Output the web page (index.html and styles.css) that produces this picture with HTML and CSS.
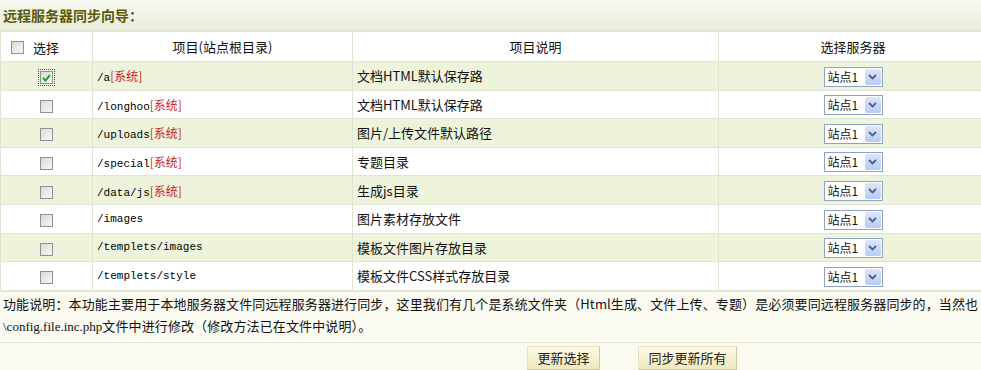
FILE: index.html
```html
<!DOCTYPE html>
<html lang="zh-CN">
<head>
<meta charset="utf-8">
<title>远程服务器同步向导</title>
<link rel="stylesheet" href="styles.css">
</head>
<body>
<div class="wrap">
  <div class="titlebar">远程服务器同步向导：</div>
  <table class="grid">
    <colgroup>
      <col class="c1"><col class="c2"><col class="c3"><col class="c4">
    </colgroup>
    <thead>
      <tr class="head">
        <th class="sel-head"><span class="cb"></span><span class="sel-label">选择</span></th>
        <th>项目(站点根目录)</th>
        <th>项目说明</th>
        <th>选择服务器</th>
      </tr>
    </thead>
    <tbody>
      <tr class="alt">
        <td class="ck"><span class="cb checked focus"><svg viewBox="0 0 9 8" width="9" height="8"><path d="M1 4 L3.5 6.5 L8 1.2" fill="none" stroke="#21a121" stroke-width="2"/></svg></span></td>
        <td class="path">/a<span class="sys">[系统]</span></td>
        <td class="desc">文档HTML默认保存路</td>
        <td class="srv"><span class="select"><span class="opt">站点1</span><span class="arrow"><svg viewBox="0 0 9 6" width="9" height="6"><path d="M1 1 L4.5 4.5 L8 1" fill="none" stroke="#4d6185" stroke-width="1.8"/></svg></span></span></td>
      </tr>
      <tr>
        <td class="ck"><span class="cb"></span></td>
        <td class="path">/longhoo<span class="sys">[系统]</span></td>
        <td class="desc">文档HTML默认保存路</td>
        <td class="srv"><span class="select"><span class="opt">站点1</span><span class="arrow"><svg viewBox="0 0 9 6" width="9" height="6"><path d="M1 1 L4.5 4.5 L8 1" fill="none" stroke="#4d6185" stroke-width="1.8"/></svg></span></span></td>
      </tr>
      <tr class="alt">
        <td class="ck"><span class="cb"></span></td>
        <td class="path">/uploads<span class="sys">[系统]</span></td>
        <td class="desc">图片/上传文件默认路径</td>
        <td class="srv"><span class="select"><span class="opt">站点1</span><span class="arrow"><svg viewBox="0 0 9 6" width="9" height="6"><path d="M1 1 L4.5 4.5 L8 1" fill="none" stroke="#4d6185" stroke-width="1.8"/></svg></span></span></td>
      </tr>
      <tr>
        <td class="ck"><span class="cb"></span></td>
        <td class="path">/special<span class="sys">[系统]</span></td>
        <td class="desc">专题目录</td>
        <td class="srv"><span class="select"><span class="opt">站点1</span><span class="arrow"><svg viewBox="0 0 9 6" width="9" height="6"><path d="M1 1 L4.5 4.5 L8 1" fill="none" stroke="#4d6185" stroke-width="1.8"/></svg></span></span></td>
      </tr>
      <tr class="alt">
        <td class="ck"><span class="cb"></span></td>
        <td class="path">/data/js<span class="sys">[系统]</span></td>
        <td class="desc">生成js目录</td>
        <td class="srv"><span class="select"><span class="opt">站点1</span><span class="arrow"><svg viewBox="0 0 9 6" width="9" height="6"><path d="M1 1 L4.5 4.5 L8 1" fill="none" stroke="#4d6185" stroke-width="1.8"/></svg></span></span></td>
      </tr>
      <tr>
        <td class="ck"><span class="cb"></span></td>
        <td class="path">/images</td>
        <td class="desc">图片素材存放文件</td>
        <td class="srv"><span class="select"><span class="opt">站点1</span><span class="arrow"><svg viewBox="0 0 9 6" width="9" height="6"><path d="M1 1 L4.5 4.5 L8 1" fill="none" stroke="#4d6185" stroke-width="1.8"/></svg></span></span></td>
      </tr>
      <tr class="alt">
        <td class="ck"><span class="cb"></span></td>
        <td class="path">/templets/images</td>
        <td class="desc">模板文件图片存放目录</td>
        <td class="srv"><span class="select"><span class="opt">站点1</span><span class="arrow"><svg viewBox="0 0 9 6" width="9" height="6"><path d="M1 1 L4.5 4.5 L8 1" fill="none" stroke="#4d6185" stroke-width="1.8"/></svg></span></span></td>
      </tr>
      <tr>
        <td class="ck"><span class="cb"></span></td>
        <td class="path">/templets/style</td>
        <td class="desc">模板文件CSS样式存放目录</td>
        <td class="srv"><span class="select"><span class="opt">站点1</span><span class="arrow"><svg viewBox="0 0 9 6" width="9" height="6"><path d="M1 1 L4.5 4.5 L8 1" fill="none" stroke="#4d6185" stroke-width="1.8"/></svg></span></span></td>
      </tr>
    </tbody>
  </table>
  <div class="note">
    <div class="line">功能说明：本功能主要用于本地服务器文件同远程服务器进行同步，这里我们有几个是系统文件夹（Html生成、文件上传、专题）是必须要同远程服务器同步的，当然也</div>
    <div class="line"><span class="cfg">\config.file.inc.php</span>文件中进行修改（修改方法已在文件中说明）。</div>
  </div>
  <div class="actions">
    <button class="btn btn-a">更新选择</button>
    <button class="btn btn-b">同步更新所有</button>
  </div>
</div>
</body>
</html>
```
FILE: styles.css
```css
html, body {
  margin: 0;
  padding: 0;
  background: #ffffff;
  overflow: hidden;
}
body {
  font-family: "Noto Sans CJK SC", "Noto Sans", sans-serif;
  font-size: 13px;
  color: #111;
}
.wrap {
  width: 987px;
}
.titlebar {
  height: 31px;
  line-height: 30px;
  padding-left: 3px;
  font-weight: bold;
  font-size: 14px;
  color: #5b5a05;
  background: linear-gradient(#f6f8f0, #e9eddc);
  border-bottom: 1px solid #dfe4cf;
  box-sizing: border-box;
}
.grid {
  width: 987px;
  border-collapse: collapse;
  table-layout: fixed;
}
.c1 { width: 92px; }
.c2 { width: 260px; }
.c3 { width: 366px; }
.c4 { width: 269px; }
.grid th, .grid td {
  border: 1px solid #dfe5d0;
  padding: 0 4px;
  white-space: nowrap;
  overflow: hidden;
}
.grid th {
  font-weight: normal;
  height: 29px;
  background: #fff;
  text-align: center;
}
.grid th.sel-head {
  text-align: left;
  padding-left: 10px;
}
.sel-head .cb {
  vertical-align: middle;
}
.sel-label {
  vertical-align: middle;
  margin-left: 9px;
}
.grid td {
  height: 27.6px;
}
.grid tr.alt td {
  background: #edf4db;
}
.grid td.ck, .grid td.srv {
  text-align: center;
}
.grid td.path {
  font-family: "Liberation Mono", "DejaVu Sans Mono", "Noto Sans CJK SC", monospace;
  font-size: 11px;
  color: #000;
  padding-left: 4px;
}
.sys {
  color: #c9231d;
  font-family: "Noto Sans CJK SC", sans-serif;
  font-size: 12px;
}
.cb {
  display: inline-block;
  width: 13px;
  height: 13px;
  box-sizing: border-box;
  border: 1px solid #8e9196;
  background: linear-gradient(135deg, #dcdcd6, #f6f6f4);
  vertical-align: middle;
  position: relative;
}
.cb.checked svg {
  position: absolute;
  left: 1px;
  top: 1.5px;
}
.cb.focus {
  outline: 1px dotted #555;
  outline-offset: 1px;
}
.select {
  display: inline-flex;
  align-items: center;
  justify-content: space-between;
  width: 59px;
  height: 20px;
  box-sizing: border-box;
  border: 1px solid #8ea3c3;
  background: #fff;
  vertical-align: middle;
  padding: 1px;
}
.opt {
  font-size: 12px;
  color: #111;
  padding-left: 2px;
  line-height: 16px;
}
.arrow {
  display: inline-flex;
  align-items: center;
  justify-content: center;
  width: 16px;
  height: 16px;
  background: linear-gradient(#dbe6fb, #b7cbf2);
  border-radius: 2px;
}
.note {
  background: #fafaf1;
  border-top: 1px solid #e5e5d5;
  border-bottom: 1px solid #e5e5d5;
  padding: 1px 0 5px 3px;
  white-space: nowrap;
  overflow: hidden;
  letter-spacing: 0.12px;
}
.note .line {
  height: 22px;
  line-height: 22px;
}
.cfg {
  font-family: "Liberation Serif", "DejaVu Serif", serif;
  font-size: 13px;
  letter-spacing: 0;
}
.actions {
  background: #fafaf1;
  height: 31px;
  display: flex;
  align-items: center;
  padding-left: 527px;
  gap: 38px;
}
.btn {
  font-family: "Noto Sans CJK SC", sans-serif;
  font-size: 13px;
  color: #222;
  height: 24px;
  padding: 0;
  box-sizing: border-box;
  border: 1px solid #e4e0c4;
  border-right-color: #cfc9a0;
  border-bottom-color: #cfc9a0;
  background: linear-gradient(#fffbe6, #efe8bd);
  line-height: 20px;
  white-space: nowrap;
  text-align: center;
}
.btn-a {
  width: 73px;
}
.btn-b {
  width: 99px;
}
```
